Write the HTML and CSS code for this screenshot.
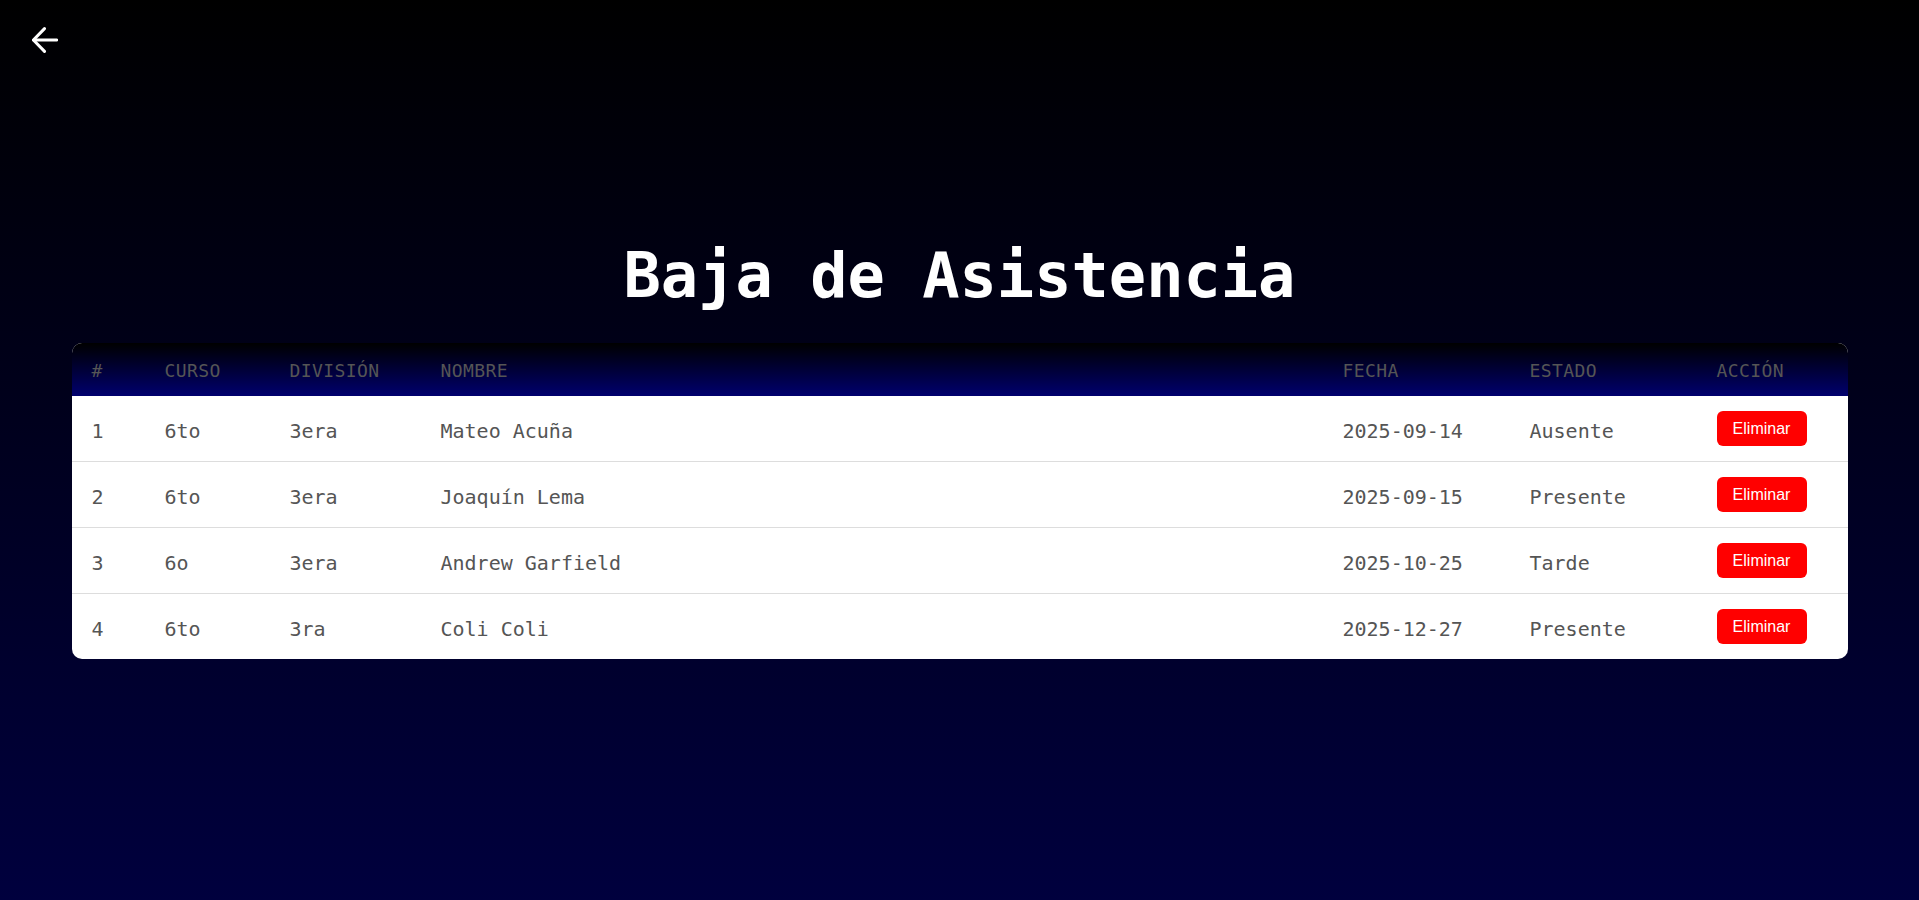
FILE: index.html
```html
<!DOCTYPE html>
<html lang="es">
<head>
<meta charset="utf-8">
<title>Baja de Asistencia</title>
<link rel="stylesheet" href="styles.css">
</head>
<body>
<div class="topbar">
  <a class="back" href="#" aria-label="Volver">
    <svg width="26" height="26" viewBox="0 0 26 26" fill="none" stroke="#fff" stroke-width="3" stroke-linecap="round" stroke-linejoin="round">
      <path d="M24.8 13H1.8"/>
      <path d="M12.5 1.6L1.4 13l11.1 11.4"/>
    </svg>
  </a>
</div>
<main class="main">
  <h1 class="title">Baja de Asistencia</h1>
  <div class="table-wrap">
    <table class="table">
      <thead>
        <tr>
          <th class="c-num">#</th>
          <th class="c-curso">Curso</th>
          <th class="c-div">División</th>
          <th class="c-nombre">Nombre</th>
          <th class="c-fecha">Fecha</th>
          <th class="c-estado">Estado</th>
          <th class="c-accion">Acción</th>
        </tr>
      </thead>
      <tbody>
        <tr>
          <td>1</td><td>6to</td><td>3era</td><td>Mateo Acuña</td><td>2025-09-14</td><td>Ausente</td>
          <td class="cell-action"><button class="btn-del">Eliminar</button></td>
        </tr>
        <tr>
          <td>2</td><td>6to</td><td>3era</td><td>Joaquín Lema</td><td>2025-09-15</td><td>Presente</td>
          <td class="cell-action"><button class="btn-del">Eliminar</button></td>
        </tr>
        <tr>
          <td>3</td><td>6o</td><td>3era</td><td>Andrew Garfield</td><td>2025-10-25</td><td>Tarde</td>
          <td class="cell-action"><button class="btn-del">Eliminar</button></td>
        </tr>
        <tr>
          <td>4</td><td>6to</td><td>3ra</td><td>Coli Coli</td><td>2025-12-27</td><td>Presente</td>
          <td class="cell-action"><button class="btn-del">Eliminar</button></td>
        </tr>
      </tbody>
    </table>
  </div>
</main>
</body>
</html>
```

FILE: styles.css
```css
html, body {
  margin: 0;
  padding: 0;
}

body {
  min-height: 100vh;
  background: linear-gradient(to bottom, #000000 0%, #00003e 100%);
  font-family: "DejaVu Sans Mono", "Liberation Mono", monospace;
  color: #fff;
}

.topbar {
  padding: 27px 0 0 32px;
  height: 26px;
}

.back {
  display: inline-block;
  width: 26px;
  height: 26px;
}

.back svg {
  display: block;
}

.main {
  display: flex;
  flex-direction: column;
  align-items: center;
}

.title {
  margin: 187px 0 0 0;
  font-family: "DejaVu Sans Mono", monospace;
  font-weight: bold;
  font-size: 62px;
  line-height: 72px;
  color: #fff;
}

.table-wrap {
  margin-top: 31px;
  width: 1776px;
  border-radius: 10px;
  overflow: hidden;
  background: #fff;
}

.table {
  width: 100%;
  border-collapse: collapse;
  table-layout: fixed;
}

.table thead tr {
  background: linear-gradient(to bottom, #000000 0%, #00006e 100%);
}

.table th {
  box-sizing: border-box;
  padding: 17px 20px 14px;
  text-align: left;
  font-weight: normal;
  font-size: 18px;
  line-height: 22px;
  letter-spacing: 0.4px;
  text-transform: uppercase;
  color: #555;
}

.c-num { width: 73px; }
.c-curso { width: 125px; }
.c-div { width: 151px; }
.c-nombre { width: 902px; }
.c-fecha { width: 187px; }
.c-estado { width: 187px; }
.c-accion { width: 151px; }

.table td {
  box-sizing: border-box;
  padding: 18px 20px 12px;
  font-size: 20px;
  line-height: 23px;
  color: #555;
  vertical-align: middle;
  white-space: nowrap;
}

.table td.cell-action {
  padding: 15px 20px;
}

.table tbody tr {
  border-bottom: 1px solid #dddddd;
}

.table tbody tr:last-child {
  border-bottom: none;
}

.btn-del {
  display: block;
  width: 90px;
  height: 35px;
  padding: 0;
  border: none;
  border-radius: 6px;
  background: #ff0000;
  color: #fff;
  font-family: "Liberation Sans", Arial, sans-serif;
  font-size: 16px;
  cursor: pointer;
}
```
